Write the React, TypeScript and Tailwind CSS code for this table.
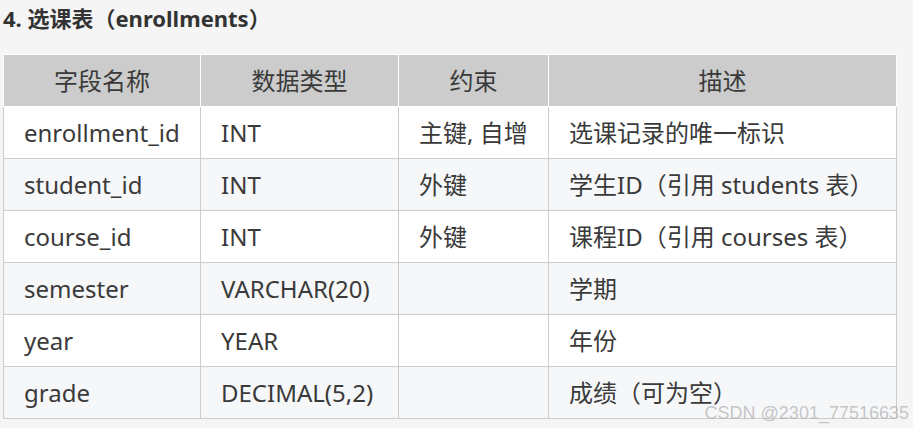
const rows = [
  ["enrollment_id", "INT", "主键, 自增", "选课记录的唯一标识"],
  ["student_id", "INT", "外键", "学生ID（引用 students 表）"],
  ["course_id", "INT", "外键", "课程ID（引用 courses 表）"],
  ["semester", "VARCHAR(20)", "", "学期"],
  ["year", "YEAR", "", "年份"],
  ["grade", "DECIMAL(5,2)", "", "成绩（可为空）"],
];

const headers = ["字段名称", "数据类型", "约束", "描述"];

export default function App() {
  return (
    <div
      className="relative h-[428px] w-[913px] overflow-hidden bg-[#f5f5f5] px-[3px] text-[#333]"
      style={{ fontFamily: '"Noto Sans", "Noto Sans CJK SC", sans-serif' }}
    >
      <h4 className="h-[54px] pt-[3px] text-[22px] font-bold leading-[30px] text-[#333]">
        4. 选课表（enrollments）
      </h4>

      <table className="w-[893px] table-fixed border-collapse text-[24px] text-[#3a3a3a]">
        <colgroup>
          <col className="w-[197px]" />
          <col className="w-[198px]" />
          <col className="w-[150px]" />
          <col className="w-[348px]" />
        </colgroup>
        <thead>
          <tr className="h-[52px] bg-[#cccccc]">
            {headers.map((h) => (
              <th key={h} className="border border-white text-center font-normal">
                {h}
              </th>
            ))}
          </tr>
        </thead>
        <tbody>
          {rows.map((row, i) => (
            <tr key={row[0]} className={i % 2 === 0 ? "h-[52px] bg-white" : "h-[52px] bg-[#f6f7f9]"}>
              {row.map((cell, j) => (
                <td key={j} className="border border-[#cccccc] pl-[20px] whitespace-nowrap">
                  {cell}
                </td>
              ))}
            </tr>
          ))}
        </tbody>
      </table>

      <div
        className="absolute right-[4px] bottom-[6px] text-[18px] leading-none text-[#b8b8b8]/80"
        style={{ fontFamily: '"Liberation Sans", sans-serif' }}
      >
        CSDN @2301_77516635
      </div>
    </div>
  );
}
